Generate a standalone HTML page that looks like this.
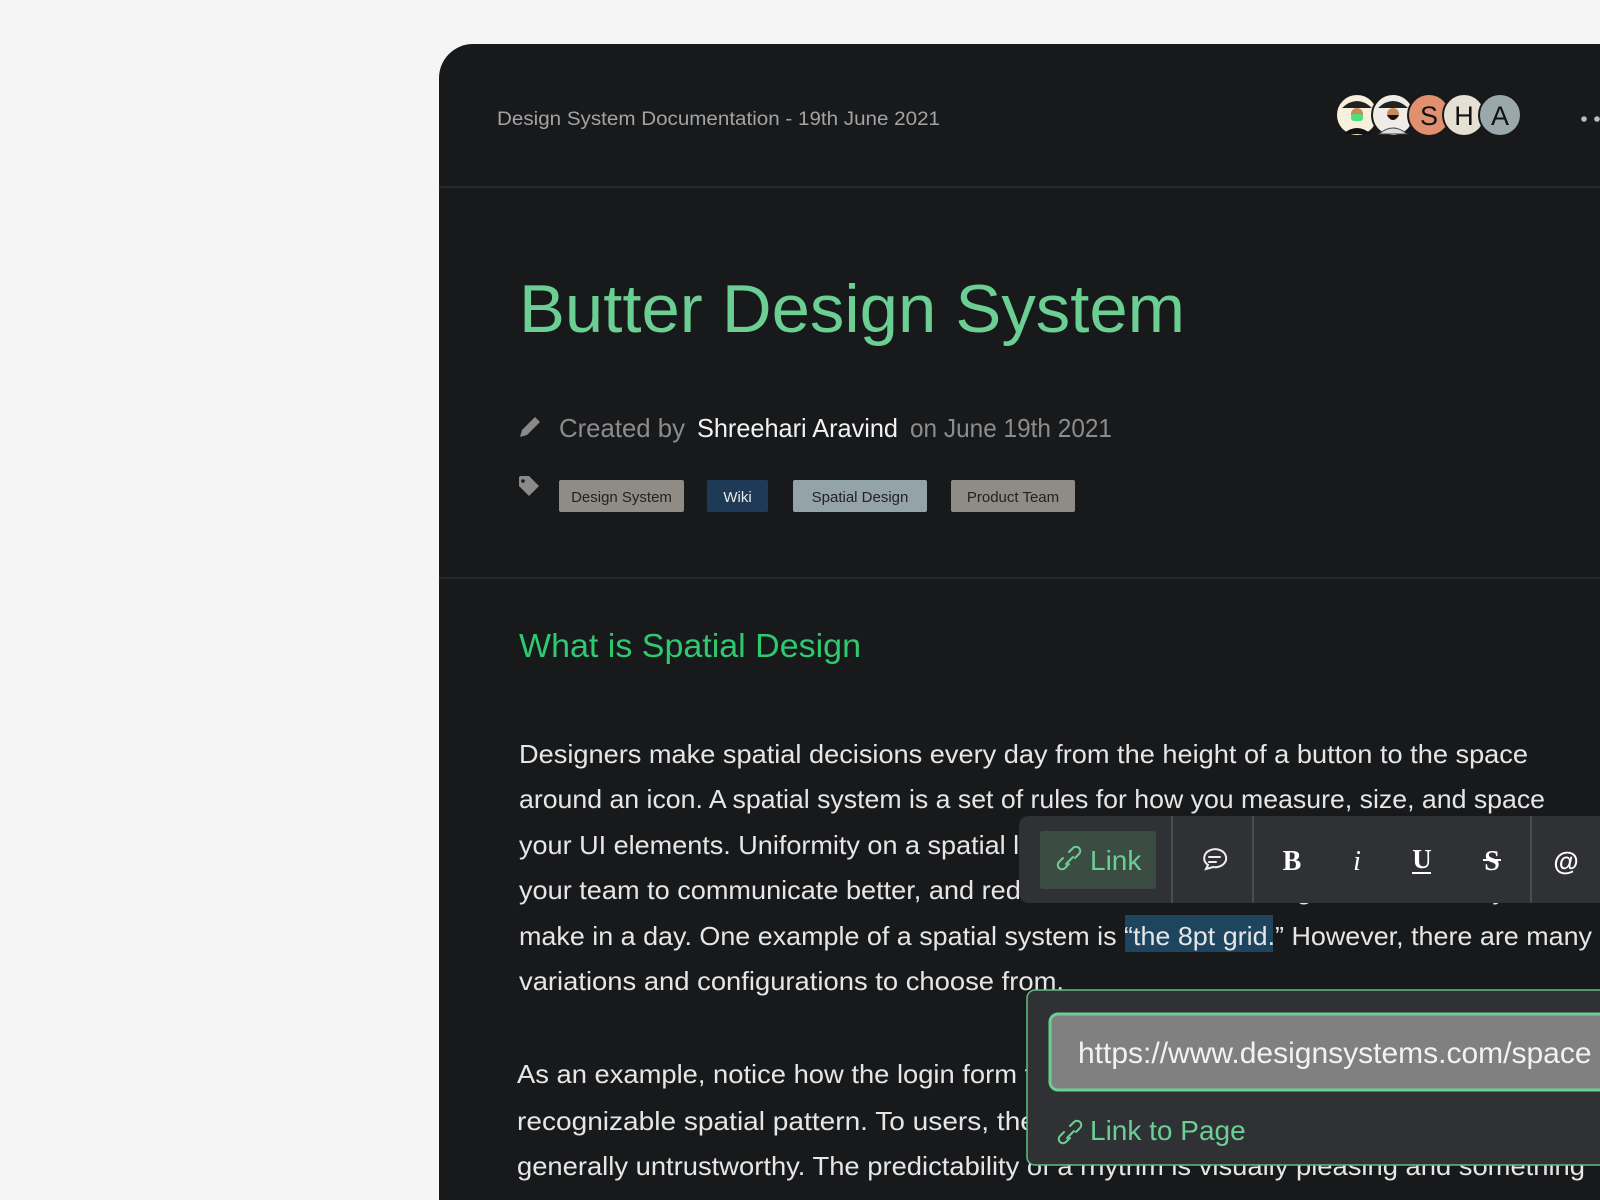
<!DOCTYPE html>
<html><head><meta charset="utf-8"><style>
html,body{margin:0;padding:0;width:1600px;height:1200px;overflow:hidden;background:#f5f5f5;font-family:"Liberation Sans",sans-serif}
svg{position:absolute;left:0;top:0}
</style></head><body>
<svg width="1600" height="1200" viewBox="0 0 1600 1200" font-family="Liberation Sans, sans-serif">
<path d="M439 1200 V78 A34 34 0 0 1 473 44 H1600 V1200 Z" fill="#18191b"/>
<line x1="439" y1="187" x2="1600" y2="187" stroke="#2c2d30" stroke-width="1.5"/>
<line x1="439" y1="578" x2="1600" y2="578" stroke="#2c2d30" stroke-width="1.5"/>
<text x="497" y="125" font-size="19" fill="#a3a3a3" textLength="443" lengthAdjust="spacingAndGlyphs">Design System Documentation - 19th June 2021</text>
<g>
<circle cx="1357" cy="115" r="21" fill="#f7f0dc" stroke="#18191b" stroke-width="2"/>
<path d="M1342 108 q15 -14 30 0 z" fill="#222"/><circle cx="1357" cy="114" r="6" fill="#c98a5a"/><rect x="1351" y="114" width="12" height="7" rx="3" fill="#4de07a"/><path d="M1343 134 q14 -12 28 0z" fill="#111"/>
<circle cx="1393" cy="115" r="21" fill="#efece8" stroke="#18191b" stroke-width="2"/>
<path d="M1378 108 q15 -14 30 0 z" fill="#222"/><circle cx="1393" cy="114" r="6" fill="#c98a5a"/><path d="M1387 115 q6 10 12 0z" fill="#111"/><path d="M1379 134 q14 -12 28 0z" fill="#ddd" stroke="#444" stroke-width="1"/>
<circle cx="1429" cy="115" r="21" fill="#e0906f" stroke="#18191b" stroke-width="2"/>
<text x="1429" y="125" font-size="27" text-anchor="middle" fill="#111">S</text>
<circle cx="1464" cy="115" r="21" fill="#e6e0d4" stroke="#18191b" stroke-width="2"/>
<text x="1464" y="125" font-size="27" text-anchor="middle" fill="#111">H</text>
<circle cx="1500" cy="115" r="21" fill="#9aa7ab" stroke="#18191b" stroke-width="2"/>
<text x="1500" y="125" font-size="27" text-anchor="middle" fill="#111">A</text>
</g>
<circle cx="1584" cy="119" r="2.8" fill="#bbb"/><circle cx="1597" cy="119" r="2.8" fill="#bbb"/>
<text x="519" y="332" font-size="68" fill="#6bcf94" textLength="666" lengthAdjust="spacingAndGlyphs">Butter Design System</text>
<path d="M520 437 l2 -7 l13 -13 l5 5 l-13 13 z" fill="#8a8a8a"/>
<text x="559" y="437" font-size="26" fill="#8c8c8c" textLength="126" lengthAdjust="spacingAndGlyphs">Created by</text>
<text x="697" y="437" font-size="26" fill="#f2f2f2" textLength="201" lengthAdjust="spacingAndGlyphs">Shreehari Aravind</text>
<text x="910" y="437" font-size="26" fill="#8c8c8c" textLength="202" lengthAdjust="spacingAndGlyphs">on June 19th 2021</text>
<path d="M519 486 v-8 a2 2 0 0 1 2 -2 h8 l10 10 l-10 10 z" fill="#8a8a8a"/><circle cx="523" cy="481" r="1.8" fill="#18191b"/>
<rect x="559" y="480" width="125" height="32" rx="2" fill="#8f8c85"/><text x="621.5" y="502" font-size="15" text-anchor="middle" fill="#222">Design System</text>
<rect x="707" y="480" width="61" height="32" rx="2" fill="#1f3a57"/><text x="737.5" y="502" font-size="15" text-anchor="middle" fill="#eaeaea">Wiki</text>
<rect x="793" y="480" width="134" height="32" rx="2" fill="#94a3a8"/><text x="860" y="502" font-size="15" text-anchor="middle" fill="#222">Spatial Design</text>
<rect x="951" y="480" width="124" height="32" rx="2" fill="#8f8c85"/><text x="1013" y="502" font-size="15" text-anchor="middle" fill="#222">Product Team</text>
<text x="519" y="657" font-size="33" fill="#2ec971" textLength="342" lengthAdjust="spacingAndGlyphs">What is Spatial Design</text>
<g font-size="26" fill="#e6e6e6">
<text x="519" y="763" textLength="1009" lengthAdjust="spacingAndGlyphs">Designers make spatial decisions every day from the height of a button to the space</text>
<text x="519" y="808" textLength="1026" lengthAdjust="spacingAndGlyphs">around an icon. A spatial system is a set of rules for how you measure, size, and space</text>
<text x="519" y="854" textLength="1050" lengthAdjust="spacingAndGlyphs">your UI elements. Uniformity on a spatial level makes things more predictable and helps</text>
<text x="519" y="899" textLength="1085" lengthAdjust="spacingAndGlyphs">your team to communicate better, and reduce the number of design decisions they need to</text>
<rect x="1125" y="915" width="148" height="37" fill="#1d4560"/>
<text x="519" y="945" textLength="1073" lengthAdjust="spacingAndGlyphs">make in a day. One example of a spatial system is “the 8pt grid.” However, there are many</text>
<text x="519" y="990" textLength="545" lengthAdjust="spacingAndGlyphs">variations and configurations to choose from.</text>
<text x="517" y="1083" textLength="1000" lengthAdjust="spacingAndGlyphs">As an example, notice how the login form fields below use a spacing that creates a</text>
<text x="517" y="1130" textLength="940" lengthAdjust="spacingAndGlyphs">recognizable spatial pattern. To users, the design without a system may feel</text>
<text x="517" y="1175" textLength="1068" lengthAdjust="spacingAndGlyphs">generally untrustworthy. The predictability of a rhythm is visually pleasing and something</text>
<text x="517" y="1221">users can come to expect from the product.</text>
</g>
<rect x="1019" y="816" width="620" height="87" rx="10" fill="#303135"/>
<rect x="1040" y="831" width="116" height="58" rx="3" fill="#3b4c43"/>
<g fill="none" stroke="#6bcf94" stroke-width="2" stroke-linecap="round">
<path d="M1069 852 l4 -4 a4 4 0 0 1 6 6 l-4 4"/><path d="M1063 858 l-4 4 a4 4 0 0 0 6 6 l4 -4"/><path d="M1066 864 l7 -7"/>
</g>
<text x="1090" y="870" font-size="28" fill="#6bcf94">Link</text>
<line x1="1172" y1="816" x2="1172" y2="903" stroke="#55565a" stroke-width="1.5"/>
<line x1="1253" y1="816" x2="1253" y2="903" stroke="#55565a" stroke-width="1.5"/>
<line x1="1531" y1="816" x2="1531" y2="903" stroke="#55565a" stroke-width="1.5"/>
<g fill="none" stroke="#eee" stroke-width="2" stroke-linecap="round">
<path d="M1206 869 l2 -4 a11 9 0 1 1 5 2 z"/><path d="M1209 857 h11 M1209 862 h7"/>
</g>
<g fill="#fff" font-family="Liberation Serif, serif" text-anchor="middle">
<text x="1292" y="870" font-size="28" font-weight="bold">B</text>
<text x="1357" y="870" font-size="28" font-style="italic">i</text>
<text x="1422" y="868" font-size="27" font-weight="bold">U</text>
<rect x="1412" y="872" width="19" height="2"/>
<text x="1492" y="870" font-size="28" font-weight="bold">S</text>
<rect x="1483" y="859" width="18" height="2"/>
</g>
<text x="1566" y="870" font-size="26" font-weight="bold" fill="#fff" text-anchor="middle">@</text>
<rect x="1027" y="990" width="620" height="175" rx="8" fill="#303135" stroke="#5fbf88" stroke-width="1.5"/>
<rect x="1050" y="1014" width="600" height="76" rx="8" fill="#808080" stroke="#6bcf94" stroke-width="3"/>
<text x="1078" y="1063" font-size="30" fill="#f2f2f2">https://www.designsystems.com/space</text>
<g fill="none" stroke="#6bcf94" stroke-width="2" stroke-linecap="round">
<path d="M1070 1126 l4 -4 a4 4 0 0 1 6 6 l-4 4"/><path d="M1064 1132 l-4 4 a4 4 0 0 0 6 6 l4 -4"/><path d="M1067 1138 l7 -7"/>
</g>
<text x="1090" y="1140" font-size="28" fill="#6bcf94">Link to Page</text>
</svg>
</body></html>
